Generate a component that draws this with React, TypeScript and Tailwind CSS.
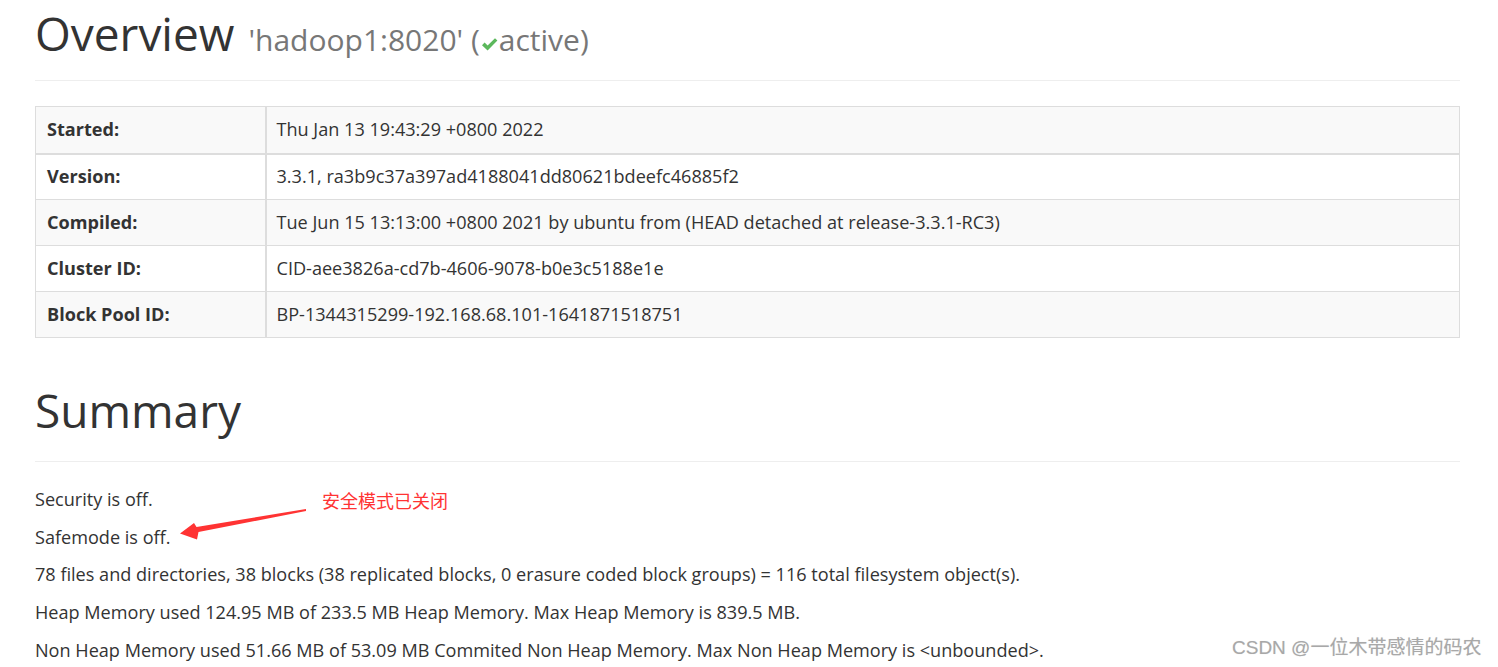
import React from "react";

const rows: [string, string][] = [
  ["Started:", "Thu Jan 13 19:43:29 +0800 2022"],
  ["Version:", "3.3.1, ra3b9c37a397ad4188041dd80621bdeefc46885f2"],
  ["Compiled:", "Tue Jun 15 13:13:00 +0800 2021 by ubuntu from (HEAD detached at release-3.3.1-RC3)"],
  ["Cluster ID:", "CID-aee3826a-cd7b-4606-9078-b0e3c5188e1e"],
  ["Block Pool ID:", "BP-1344315299-192.168.68.101-1641871518751"],
];

const lines = [
  "Security is off.",
  "Safemode is off.",
  "78 files and directories, 38 blocks (38 replicated blocks, 0 erasure coded block groups) = 116 total filesystem object(s).",
  "Heap Memory used 124.95 MB of 233.5 MB Heap Memory. Max Heap Memory is 839.5 MB.",
  "Non Heap Memory used 51.66 MB of 53.09 MB Commited Non Heap Memory. Max Non Heap Memory is <unbounded>.",
];

export default function App() {
  return (
    <div className="relative w-[1498px] h-[667px] overflow-hidden bg-white text-[#333] font-['Open_Sans','Noto_Sans',sans-serif]">
      <div className="ml-[35px] w-[1425px]">
        <div className="pt-[5px] pb-[12px] border-b border-[#eee]">
          <h1 className="flex items-baseline leading-[56px]">
            <span className="text-[46px]">Overview</span>
            <span className="ml-[14px] text-[30px] text-[#777] flex items-baseline">
              <span>'hadoop1:8020' (</span>
              <svg width="17" height="15" viewBox="0 0 17 15" className="mx-[1px] self-center mt-[8px]">
                <path d="M1 8.2 L3.6 5.6 L6.6 8.6 L14 1.2 L16.4 3.6 L6.6 13.4 Z" fill="#5cb85c" />
              </svg>
              <span>active)</span>
            </span>
          </h1>
        </div>

        <table className="mt-[25px] w-full border-collapse border border-[#ddd] text-[18.1px]">
          <tbody>
            {rows.map(([k, v], i) => (
              <tr key={k} className={i % 2 === 0 ? "bg-[#f9f9f9]" : "bg-white"}>
                <th className={`w-[230px] px-[11px] text-left font-bold border-[#ddd] border-r-2 ${i === 0 ? "border-b-2 h-[47px]" : "border-b h-[46px]"}`}>
                  {k}
                </th>
                <td className={`px-[10px] text-left border-[#ddd] ${i === 0 ? "border-b-2 h-[47px]" : "border-b h-[46px]"}`}>{v}</td>
              </tr>
            ))}
          </tbody>
        </table>

        <div className="mt-[44px] pb-[23px] border-b border-[#eee]">
          <h2 className="text-[46px] leading-[56px]">Summary</h2>
        </div>

        <div className="mt-[19px] text-[18.1px]">
          {lines.map((l) => (
            <p key={l} className="leading-[37.7px] whitespace-nowrap">{l}</p>
          ))}
        </div>
      </div>

      {/* annotation */}
      <div className="absolute left-[322px] top-[488px] text-[18px] leading-[24px] text-[#f33] font-['Noto_Sans_CJK_SC',sans-serif]">
        安全模式已关闭
      </div>
      <svg className="absolute left-0 top-0" width="1498" height="667" viewBox="0 0 1498 667">
        <polygon
          points="180,533.5 194,523 196.5,527 306,509 306,511 198.5,532 197,539.5"
          fill="#f33"
        />
      </svg>

      <div className="absolute left-[1232px] top-[635px] text-[19px] leading-[26px] text-[#a8a8a8] [text-shadow:0_0_1px_#ddd] font-['Liberation_Sans','Noto_Sans_CJK_SC',sans-serif]">
        CSDN @一位木带感情的码农
      </div>
    </div>
  );
}
